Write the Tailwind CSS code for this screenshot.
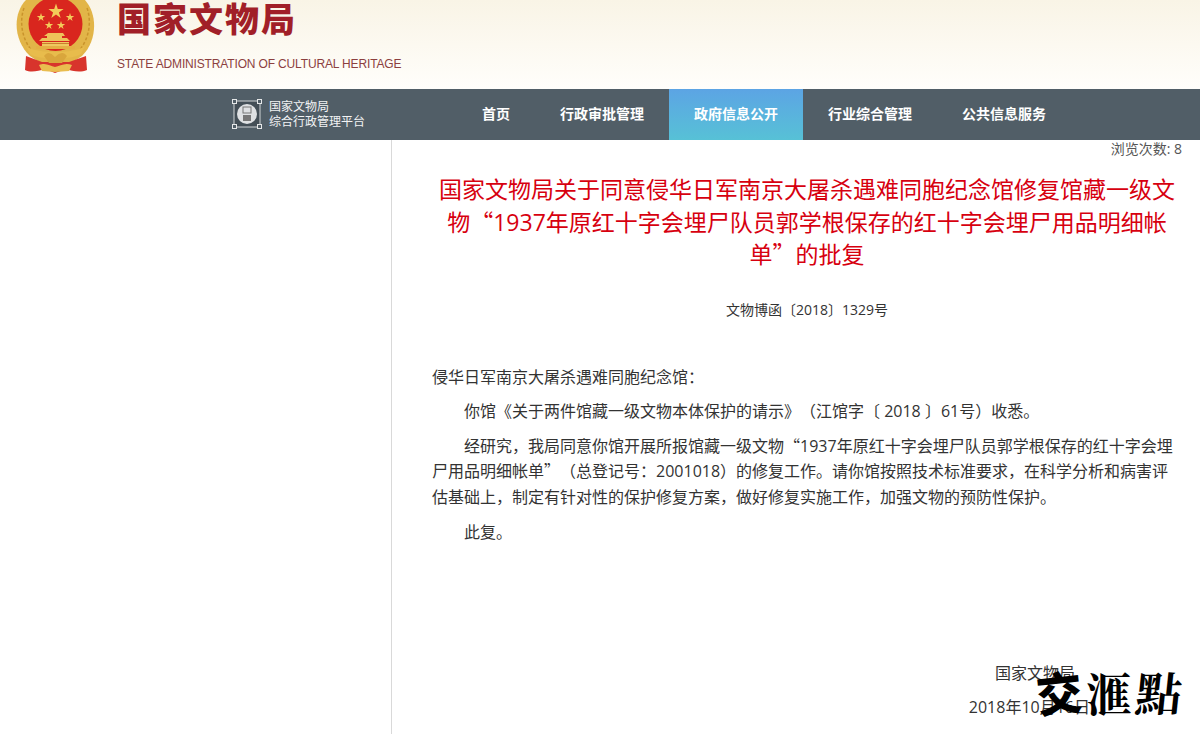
<!DOCTYPE html>
<html lang="zh-CN">
<head>
  <meta charset="UTF-8" />
  <title>国家文物局</title>
  <script src="https://cdn.jsdelivr.net/npm/@tailwindcss/browser@4"></script>
</head>
<body class="bg-white text-[#333] font-['Open_Sans','Noto_Sans_CJK_SC',sans-serif] [text-spacing-trim:space-all] h-[734px] overflow-hidden">

  <!-- Header -->
  <header class="h-[89px] bg-gradient-to-b from-[#f9f4e6] to-[#fffefb] flex">
    <svg class="w-[110px] h-[85px] shrink-0" viewBox="0 0 110 85">
      <!-- wreath -->
      <path d="M28 -2 C12 12 13 40 30 56 L42 64 L70 64 L82 56 C98 40 98 12 83 -2Z" fill="#e2b548"/>
      <path d="M24 8 C19 22 22 40 33 52 M87 8 C92 22 89 40 78 52" fill="none" stroke="#c9932c" stroke-width="1.500" stroke-dasharray="3 2"/>
      <!-- disc -->
      <ellipse cx="55.500" cy="24" rx="27" ry="27" fill="#d9261e"/>
      <!-- stars -->
      <path d="M56 3.500l1.800 5.500h5.800l-4.700 3.400 1.800 5.500-4.700-3.400-4.700 3.400 1.800-5.500-4.700-3.400h5.800z" fill="#f3cb5a"/>
      <path d="M41 13l1 3h3.200l-2.600 1.900 1 3-2.600-1.900-2.600 1.900 1-3-2.600-1.900h3.200z" fill="#f3cb5a"/>
      <path d="M70 13l1 3h3.200l-2.600 1.900 1 3-2.600-1.900-2.600 1.900 1-3-2.600-1.900h3.200z" fill="#f3cb5a"/>
      <path d="M49 21l1 3h3.200l-2.600 1.900 1 3-2.600-1.900-2.600 1.900 1-3-2.600-1.900h3.200z" fill="#f3cb5a"/>
      <path d="M61 21l1 3h3.200l-2.600 1.900 1 3-2.600-1.900-2.600 1.900 1-3-2.600-1.900h3.200z" fill="#f3cb5a"/>
      <!-- gate -->
      <path d="M48 33h15l2 3h-3v2h5l3 3h-31l3-3h5v-2h-3z" fill="#eec35a"/>
      <path d="M42 42h27v4H42z" fill="#f0c860"/>
      <path d="M36 46h39v3H36z" fill="#e4b044"/>
      <path d="M42 43h27v1H42z" fill="#c9802e"/>
      <!-- ribbons -->
      <path d="M26 56 L42 62 L69 62 L86 56 L87 70 C80 73 72 71 66 69 L55 73 L45 69 C38 71 31 73 25 70Z" fill="#d8342c"/>
      <path d="M39 65 C46 62 50 66 55 67 C60 66 65 62 72 65 L69 71 L55 72 L42 71Z" fill="#e9bd4f"/>
      <!-- band -->
      <path d="M26 46 C36 54 74 54 85 46 L81 54 C72 60 38 60 30 54Z" fill="#e8bc4c"/>
      <path d="M44 56 C48 50 52 54 55 57 C58 54 63 50 67 56 L62 63 H49Z" fill="#d9a63c"/>
    </svg>
    <div class="ml-[7px]">
      <h1 class="h-[38px] text-[34px] leading-[36px] font-black tracking-[2px] text-[#a11f28] font-['Noto_Sans_CJK_SC',sans-serif]">国家文物局</h1>
      <p class="mt-[18px] text-[12px] leading-[16px] tracking-[-0.150px] text-[#8c3f3f] font-['Liberation_Sans',sans-serif]">STATE ADMINISTRATION OF CULTURAL HERITAGE</p>
    </div>
  </header>

  <!-- Nav -->
  <nav class="h-[51px] bg-[#515e67] flex text-white">
    <div class="ml-[232px] w-[225px] flex items-center gap-[7px] pb-[2px]">
      <svg class="w-[30px] h-[30px]" viewBox="0 0 30 30">
        <rect x="2" y="2" width="26" height="26" fill="#444f57" stroke="#cfd3d6"/>
        <rect x="0.500" y="0.500" width="4" height="4" fill="#515e67" stroke="#e5e7e8"/>
        <rect x="25.500" y="0.500" width="4" height="4" fill="#515e67" stroke="#e5e7e8"/>
        <rect x="0.500" y="25.500" width="4" height="4" fill="#515e67" stroke="#e5e7e8"/>
        <rect x="25.500" y="25.500" width="4" height="4" fill="#515e67" stroke="#e5e7e8"/>
        <circle cx="15" cy="15" r="10" fill="#dfe1e3"/>
        <rect x="11" y="8" width="8" height="6" fill="none" stroke="#777" stroke-width="1"/>
        <rect x="11" y="16" width="8" height="6" fill="#777"/>
      </svg>
      <div class="text-[12px] leading-[15px] text-[#f2f3f4]">
        <div>国家文物局</div>
        <div>综合行政管理平台</div>
      </div>
    </div>
    <ul class="flex text-[14px] font-bold">
      <li class="px-[25px] pb-[2px] flex items-center">首页</li>
      <li class="px-[25px] pb-[2px] flex items-center">行政审批管理</li>
      <li class="px-[25px] pb-[2px] flex items-center bg-gradient-to-b from-[#5ca4e4] to-[#57c1d6]">政府信息公开</li>
      <li class="px-[25px] pb-[2px] flex items-center">行业综合管理</li>
      <li class="px-[25px] pb-[2px] flex items-center">公共信息服务</li>
    </ul>
  </nav>

  <!-- Body -->
  <div class="flex h-[594px]">
    <aside class="w-[392px] shrink-0 border-r border-[#d9d9d9]"></aside>
    <main class="relative w-[750px] ml-[40px]">
      <div class="text-right text-[14px] leading-[18px] text-[#555]">浏览次数: 8</div>
      <h2 class="mt-[15px] text-center text-[23px] leading-[32.500px] text-[#d7000f]">国家文物局关于同意侵华日军南京大屠杀遇难同胞纪念馆修复馆藏一级文物<span class="leading-[0] font-['Noto_Sans_CJK_SC']">“</span>1937年原红十字会埋尸队员郭学根保存的红十字会埋尸用品明细帐单<span class="leading-[0] font-['Noto_Sans_CJK_SC']">”</span>的批复</h2>
      <p class="mt-[29px] text-center text-[14px] leading-[20px]">文物博函〔2018〕1329号</p>
      <div class="mt-[45px] text-[16px] leading-[25.600px]">
        <p class="mb-[9px]">侵华日军南京大屠杀遇难同胞纪念馆<span class="leading-[0] font-['Noto_Sans_CJK_TC']">：</span></p>
        <p class="mb-[9px] indent-[32px]">你馆《关于两件馆藏一级文物本体保护的请示》（江馆字〔 2018 〕61号）收悉。</p>
        <p class="mb-[10px] indent-[32px]">经研究，我局同意你馆开展所报馆藏一级文物<span class="leading-[0] font-['Noto_Sans_CJK_SC']">“</span>1937年原红十字会埋尸队员郭学根保存的红十字会埋尸用品明细帐单<span class="leading-[0] font-['Noto_Sans_CJK_SC']">”</span>（总登记号<span class="leading-[0] font-['Noto_Sans_CJK_TC']">：</span>2001018）的修复工作。请你馆按照技术标准要求，在科学分析和病害评估基础上，制定有针对性的保护修复方案，做好修复实施工作，加强文物的预防性保护。</p>
        <p class="indent-[32px]">此复。</p>
      </div>
      <div class="absolute right-0 top-[520px] text-[16px] leading-[26px] text-right">
        <p class="pr-[107px] mb-[8px]">国家文物局</p>
        <p class="pr-[92px]">2018年10月16日</p>
      </div>
      <!-- calligraphy watermark -->
      <div class="absolute left-[604px] top-[526px] flex gap-[4px] text-black text-[46px] leading-[50px] whitespace-nowrap">
        <span class="font-black font-['Noto_Sans_CJK_SC'] -rotate-6">交</span>
        <span class="font-bold font-['Noto_Serif_CJK_SC',serif]">滙</span>
        <span class="font-bold font-['Noto_Serif_CJK_SC',serif] -skew-x-6">點</span>
      </div>
    </main>
  </div>
</body>
</html>
